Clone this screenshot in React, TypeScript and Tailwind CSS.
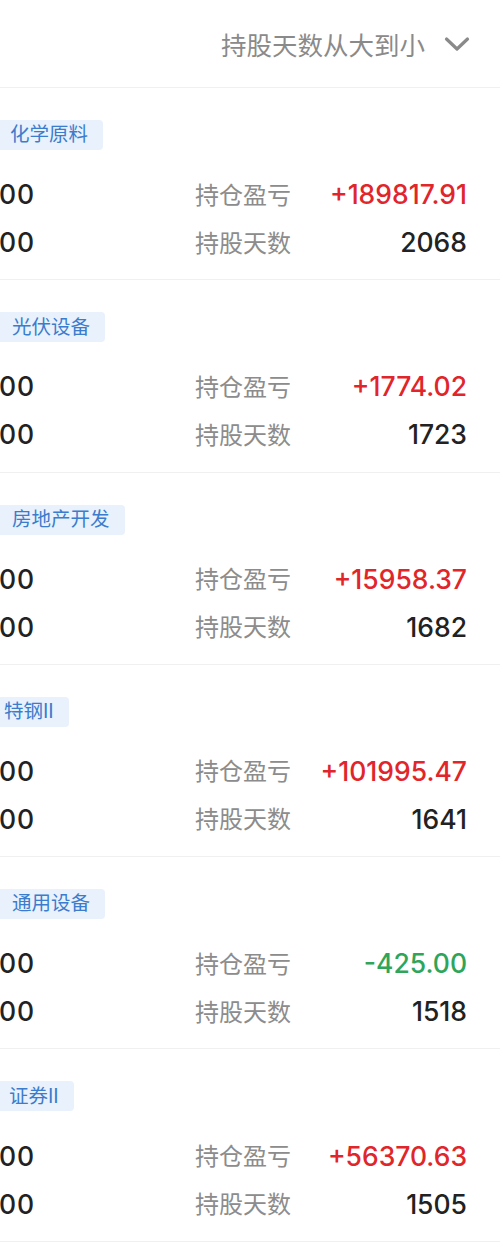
import React from "react";

type Item = { tag: string; pnl: string; days: string; up: boolean; off: string };

const items: Item[] = [
  { tag: "化学原料", pnl: "+189817.91", days: "2068", up: true, off: "-ml-[6px]" },
  { tag: "光伏设备", pnl: "+1774.02", days: "1723", up: true, off: "-ml-[4px]" },
  { tag: "房地产开发", pnl: "+15958.37", days: "1682", up: true, off: "-ml-[4px]" },
  { tag: "特钢II", pnl: "+101995.47", days: "1641", up: true, off: "-ml-[12px]" },
  { tag: "通用设备", pnl: "-425.00", days: "1518", up: false, off: "-ml-[4px]" },
  { tag: "证券II", pnl: "+56370.63", days: "1505", up: true, off: "-ml-[7px]" },
];

const cjk = { fontFamily: '"Noto Sans CJK SC", "Noto Sans", sans-serif' };
const tagFont = { fontFamily: 'Roboto, "Noto Sans CJK SC", sans-serif' };
const num = { fontFamily: 'Inter, "Noto Sans CJK SC", sans-serif' };

function Row({ label, value, color }: { label: string; value: string; color: string }) {
  return (
    <div className="flex h-[48px] items-center">
      <div className="w-[196px] shrink-0 -ml-[1px] text-[26.5px] font-medium tracking-[1px] text-[#222222]" style={num}>
        00
      </div>
      <div className="mb-[3px] text-[24px] leading-none text-[#8c8c8c]" style={cjk}>
        {label}
      </div>
      <div className={`flex-1 pr-[33px] text-right text-[26.5px] font-medium ${color}`} style={num}>
        {value}
      </div>
    </div>
  );
}

export default function App() {
  return (
    <div className="w-[500px] bg-white">
      <div className="flex h-[88px] items-center justify-end border-b border-[#f0f0f0] pr-[30px]">
        <span className="text-[25.5px] leading-none text-[#8a8a8a]" style={cjk}>
          持股天数从大到小
        </span>
        <svg className="ml-[19px]" width="26" height="16" viewBox="0 0 26 16" fill="none">
          <path d="M2.5 3 L13 13 L23.5 3" stroke="#8a8a8a" strokeWidth="3.2" strokeLinecap="round" strokeLinejoin="round" />
        </svg>
      </div>
      {items.map((it) => (
        <div key={it.tag} className="h-[192.3px] border-b border-[#f0f0f0] pt-[32px]">
          <div className="flex">
            <div
              className={`${it.off} flex h-[30px] items-center rounded-[4px] bg-[#e8f1fc] pl-[16px] pr-[15px] text-[19.5px] leading-none text-[#3b7ccc]`}
              style={tagFont}
            >
              {it.tag}
            </div>
          </div>
          <div className="mt-[21px]">
            <Row label="持仓盈亏" value={it.pnl} color={it.up ? "text-[#e0262b]" : "text-[#2fa55a]"} />
            <Row label="持股天数" value={it.days} color="text-[#222222]" />
          </div>
        </div>
      ))}
    </div>
  );
}
